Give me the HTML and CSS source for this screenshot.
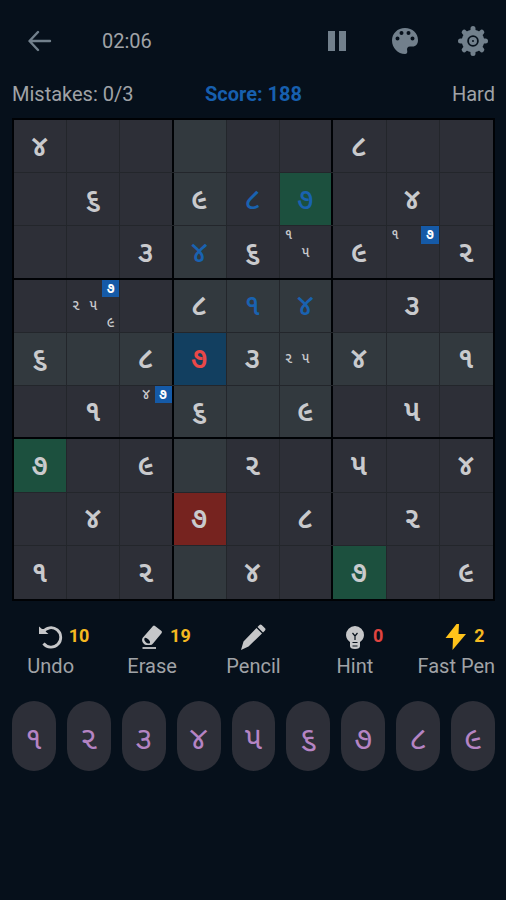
FILE: index.html
```html
<!DOCTYPE html>
<html lang="en">
<head>
<meta charset="utf-8">
<meta name="viewport" content="width=device-width, initial-scale=1">
<title>Sudoku</title>
<link rel="stylesheet" href="styles.css">
</head>
<body>
<main class="game">
  <header class="topbar">
    <button class="icon-btn" aria-label="Back"><svg width="24" height="22" viewBox="0 0 24 22" fill="none" stroke="currentColor" stroke-width="2.400" stroke-linecap="round" stroke-linejoin="round"><path d="M22 11H2M10 2L1.500 11L10 20"/></svg></button>
    <time class="timer">02:06</time>
    <button class="icon-btn" aria-label="Pause"><svg width="18" height="20" viewBox="0 0 18 20" fill="currentColor"><path d="M0 0h7v20H0zM11 0h7v20h-7z"/></svg></button>
    <button class="icon-btn" aria-label="Theme"><svg width="28" height="28" viewBox="0 0 28 28" fill="currentColor"><path fill-rule="evenodd" d="M14 1C6.500 1 1 6.500 1 13.500C1 21 7 27 14 27C16 27 16.600 25.500 16.200 24C15.600 21 16.600 19.500 19 19.500H21.500C25 19.500 27 17 27 13C27 6 21.500 1 14 1ZM6.500 9.500a2 2 0 1 1 0 4a2 2 0 1 1 0-4ZM10.500 4a2 2 0 1 1 0 4a2 2 0 1 1 0-4ZM17.500 4a2 2 0 1 1 0 4a2 2 0 1 1 0-4ZM21.500 9.500a2 2 0 1 1 0 4a2 2 0 1 1 0-4Z"/></svg></button>
    <button class="icon-btn" aria-label="Settings"><svg width="30" height="30" viewBox="0 0 30 30"><g fill="none" stroke="currentColor"><circle cx="15" cy="15" r="8.500" stroke-width="5.400"/><path stroke-width="5" stroke-linecap="round" d="M15 2.500v4M15 23.500v4M2.500 15h4M23.500 15h4M6.200 6.200l2.500 2.500M21.300 21.300l2.500 2.500M23.800 6.200l-2.500 2.500M8.700 21.300l-2.500 2.500"/><circle cx="15" cy="15" r="2.500" stroke-width="3"/></g></svg></button>
  </header>

  <section class="status">
    <span>Mistakes: 0/3</span>
    <strong class="score">Score: 188</strong>
    <span class="level">Hard</span>
  </section>

  <section class="board" aria-label="Board">
    <div class="row"><button class="cell">૪</button><button class="cell"></button><button class="cell"></button><button class="cell peer"></button><button class="cell"></button><button class="cell"></button><button class="cell">૮</button><button class="cell"></button><button class="cell"></button></div>
    <div class="row"><button class="cell"></button><button class="cell">૬</button><button class="cell"></button><button class="cell peer">૯</button><button class="cell entered">૮</button><button class="cell entered same">૭</button><button class="cell"></button><button class="cell">૪</button><button class="cell"></button></div>
    <div class="row"><button class="cell"></button><button class="cell"></button><button class="cell">૩</button><button class="cell peer entered">૪</button><button class="cell">૬</button><button class="cell notes"><span class="n1">૧</span><span class="n5">૫</span></button><button class="cell">૯</button><button class="cell notes"><span class="n1">૧</span><span class="n3 hit">૭</span></button><button class="cell">૨</button></div>
    <div class="row"><button class="cell"></button><button class="cell notes"><span class="n3 hit">૭</span><span class="n4">૨</span><span class="n5">૫</span><span class="n9">૯</span></button><button class="cell"></button><button class="cell peer">૮</button><button class="cell peer entered">૧</button><button class="cell peer entered">૪</button><button class="cell"></button><button class="cell">૩</button><button class="cell"></button></div>
    <div class="row"><button class="cell peer">૬</button><button class="cell peer"></button><button class="cell peer">૮</button><button class="cell selected">૭</button><button class="cell peer">૩</button><button class="cell peer notes"><span class="n4">૨</span><span class="n5">૫</span></button><button class="cell peer">૪</button><button class="cell peer"></button><button class="cell peer">૧</button></div>
    <div class="row"><button class="cell"></button><button class="cell">૧</button><button class="cell notes"><span class="n2">૪</span><span class="n3 hit">૭</span></button><button class="cell peer">૬</button><button class="cell peer"></button><button class="cell peer">૯</button><button class="cell"></button><button class="cell">૫</button><button class="cell"></button></div>
    <div class="row"><button class="cell same">૭</button><button class="cell"></button><button class="cell">૯</button><button class="cell peer"></button><button class="cell">૨</button><button class="cell"></button><button class="cell">૫</button><button class="cell"></button><button class="cell">૪</button></div>
    <div class="row"><button class="cell"></button><button class="cell">૪</button><button class="cell"></button><button class="cell conflict">૭</button><button class="cell"></button><button class="cell">૮</button><button class="cell"></button><button class="cell">૨</button><button class="cell"></button></div>
    <div class="row"><button class="cell">૧</button><button class="cell"></button><button class="cell">૨</button><button class="cell peer"></button><button class="cell">૪</button><button class="cell"></button><button class="cell same">૭</button><button class="cell"></button><button class="cell">૯</button></div>
  </section>

  <nav class="tools">
    <button class="tool"><span class="tool-top"><svg width="26" height="26" viewBox="0 0 26 26" fill="none" stroke="currentColor" stroke-width="2.800"><path d="M5 8A9.700 9.700 0 1 1 5.500 19.500"/><path fill="currentColor" stroke="none" d="M1 2.500l3 2.500L8.500 5l-1 2.500l3 2.500H1z"/></svg><b class="count">10</b></span><span>Undo</span></button>
    <button class="tool"><span class="tool-top"><svg width="26" height="26" viewBox="0 0 26 26"><path fill="currentColor" d="M14 2q1-1 2 0l6.500 5q1 1 0 2.300L14 19.500q-1 1.500-3 1.500H7.500q-1.500 0-2.500-1l-1.500-2q-1-2 0-4z"/><path d="M5.500 14q1.500-1 4 1.500t1 4q-2 .5-4-1.500t-1-4z" fill="#06101b"/><path d="M3.500 24h13.500" stroke="currentColor" stroke-width="1.800"/></svg><b class="count">19</b></span><span>Erase</span></button>
    <button class="tool"><span class="tool-top"><svg width="26" height="26" viewBox="0 0 26 26" fill="currentColor"><path d="M16.500 4l5.500 5.500L8.500 22.500l-7.500 3.500l2.500-8.500zM17.500 3l2-2q1-1 2.200 0l3.300 3.300q1 1 0 2.200l-2 2z"/></svg></span><span>Pencil</span></button>
    <button class="tool"><span class="tool-top"><svg width="26" height="26" viewBox="0 0 26 26"><path fill="currentColor" d="M13 2a9 9 0 0 0-9 9c0 3.500 2 5.500 4 7v4q0 3 5 3t5-3v-4c2-1.500 4-3.500 4-7a9 9 0 0 0-9-9z"/><path d="M10.500 9l2.500 3l2.500-3M13 12v4M10.500 18.500h5M10.500 22h5" fill="none" stroke="#06101b" stroke-width="1.200"/></svg><b class="count empty">0</b></span><span>Hint</span></button>
    <button class="tool"><span class="tool-top"><svg class="bolt" width="26" height="28" viewBox="0 0 26 28" fill="currentColor"><path d="M13.500 1L2.500 15h7.500L9.500 27L23 11h-7.500L16 1z"/></svg><b class="count">2</b></span><span>Fast Pen</span></button>
  </nav>

  <section class="keypad" aria-label="Digits">
    <button class="key">૧</button><button class="key">૨</button><button class="key">૩</button><button class="key">૪</button><button class="key">૫</button><button class="key">૬</button><button class="key">૭</button><button class="key">૮</button><button class="key">૯</button>
  </section>
</main>
</body>
</html>
```
FILE: styles.css
```css
* { box-sizing: border-box; }
body {
  margin: 0;
  min-height: 100vh;
  background: #06101b;
  color: #a0a3a7;
  font: 20px/24px Roboto, "Noto Sans Gujarati", "Noto Sans", sans-serif;
}
button {
  padding: 0;
  border: 0;
  background: none;
  color: inherit;
  font: inherit;
  cursor: pointer;
}
svg { display: block; }
.game { padding: 17px 11px 0 12px; }

.topbar {
  display: grid;
  grid-template-columns: 56px 1fr 56px 80px 56px;
  align-items: center;
  height: 48px;
  margin-right: -6px;
}
.topbar .timer { padding-left: 34px; }
.icon-btn {
  display: flex;
  justify-content: center;
  color: #72808c;
}

.status {
  display: grid;
  grid-template-columns: 1fr auto 1fr;
  margin: 17px 0 12px;
}
.score { color: #175fae; font-weight: 700; }
.level { text-align: right; }

.board {
  display: grid;
  grid-template-rows: repeat(9, 1fr);
  aspect-ratio: 1;
  border: 2px solid #000205;
}
.row {
  display: grid;
  grid-template-columns: repeat(9, 1fr);
  min-height: 0;
  border-bottom: 1px solid #23262b;
}
.row:nth-child(3n) { border-bottom: 2px solid #000205; }
.row:last-child { border-bottom: 0; }
.cell {
  display: flex;
  align-items: center;
  justify-content: center;
  min-width: 0;
  padding: 0 1px 1px 0;
  border-right: 1px solid #23262b;
  background: #2d2f37;
  color: #c9cacd;
  font-size: 29px;
  font-weight: 600;
}
.cell:nth-child(3n) { border-right: 2px solid #000205; }
.cell:last-child { border-right: 0; }
.peer { background: #32393e; }
.same { background: #1c503e; }
.entered { color: #1962b0; font-weight: 500; }
.selected { background: #123f60; color: #ea4848; }
.conflict { background: #76231f; }

.notes {
  display: grid;
  grid-template: repeat(3, 1fr) / repeat(3, 1fr);
  align-items: stretch;
  justify-content: stretch;
  padding: 0;
  font-size: 14px;
  line-height: 17px;
  font-weight: 500;
}
.n1 { grid-area: 1 / 1; }
.n2 { grid-area: 1 / 2; }
.n3 { grid-area: 1 / 3; }
.n4 { grid-area: 2 / 1; }
.n5 { grid-area: 2 / 2; }
.n9 { grid-area: 3 / 3; }
.hit { background: #155aa7; color: #fff; font-weight: 700; }

.tools {
  display: grid;
  grid-template-columns: repeat(5, 1fr);
  margin: 22px -12px 0;
}
.tool {
  display: flex;
  flex-direction: column;
  align-items: center;
  gap: 3px;
  white-space: nowrap;
}
.tool-top {
  position: relative;
  display: flex;
  align-items: center;
  height: 28px;
  color: #c6c7c9;
}
.count {
  position: absolute;
  top: 1px;
  left: 31px;
  color: #f5b921;
  font-size: 18px;
}
.empty { color: #e04440; }
.bolt { color: #ffc31a; }

.keypad {
  display: grid;
  grid-template-columns: repeat(9, 1fr);
  gap: 11px;
  margin-top: 23px;
}
.key {
  height: 70px;
  padding-top: 3px;
  border-radius: 22px;
  background: #2d2f38;
  color: #b584c4;
  font-size: 32px;
  font-weight: 400;
}
```
